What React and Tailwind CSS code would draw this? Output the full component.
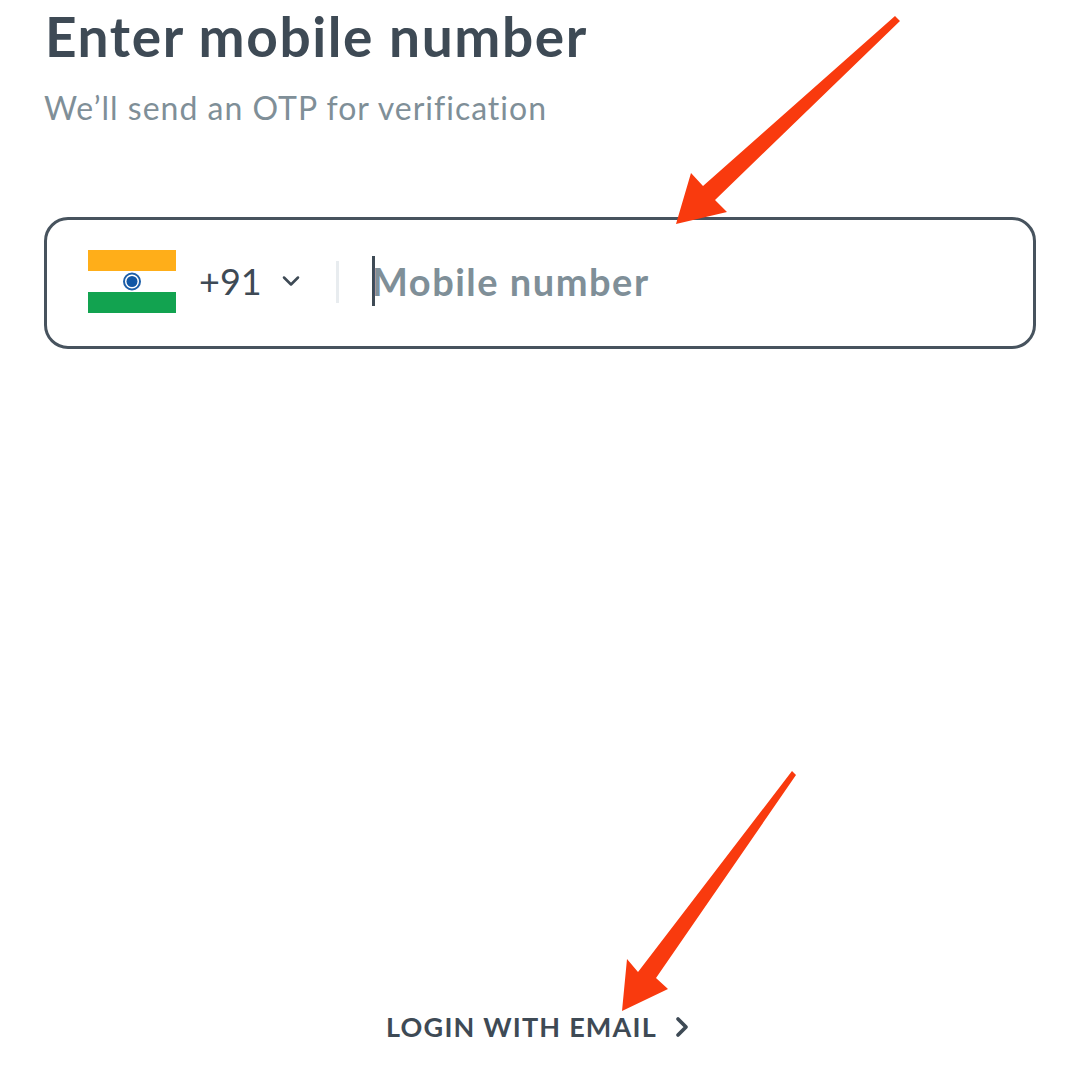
import { ChevronDown, ChevronRight } from 'lucide-react';

function Flag() {
  return (
    <svg width="88" height="63" viewBox="0 0 88 63" className="flex-shrink-0">
      <rect width="88" height="21" fill="#ffae19" />
      <rect y="21" width="88" height="21" fill="#ffffff" />
      <rect y="42" width="88" height="21" fill="#12a350" />
      <circle cx="44" cy="31.5" r="8" fill="none" stroke="#1d5fa8" strokeWidth="2" />
      <circle cx="44" cy="31.5" r="5.5" fill="#1157a5" />
    </svg>
  );
}

export default function App() {
  return (
    <div className="relative h-[1080px] w-[1080px] overflow-hidden bg-white text-[#3e4a55] font-['Lato',sans-serif]">
      <div className="flex h-full flex-col px-[45px]">
        {/* Header */}
        <h1 className="mt-[5px] h-[62px] text-[55px] font-bold leading-[62px] tracking-[1.6px]">Enter mobile number</h1>
        <p className="-ml-px mt-[21px] h-[40px] text-[32px] leading-[40px] tracking-[1px] text-[#7f8f98]">We’ll send an OTP for verification</p>

        {/* Phone input */}
        <div className="-ml-px mt-[89px] flex h-[132px] w-[992px] items-center rounded-[24px] border-[3px] border-[#47535e] pb-[4px] pl-[41px]">
          <Flag />
          <span className="ml-[23px] w-[62px] text-[36px] leading-none">+91</span>
          <ChevronDown className="ml-[16px] h-[28px] w-[28px]" strokeWidth={2.2} />
          <div className="ml-[31px] mt-[2px] h-[42px] w-[3px] bg-[#e8ecef]" />
          <div className="ml-[33px] h-[50px] w-[3px] bg-[#3e4a55]" />
          <span className="-ml-[3px] text-[38px] font-bold leading-none tracking-[1.5px] text-[#7f8f98]">Mobile number</span>
        </div>

        {/* Email link */}
        <div className="mt-auto mb-[36px] flex items-center justify-center gap-[9px] pl-[4px]">
          <span className="text-[27px] font-bold leading-[34px] tracking-[1.2px]">LOGIN WITH EMAIL</span>
          <ChevronRight className="h-[32px] w-[32px]" strokeWidth={2.8} />
        </div>
      </div>

      {/* Red annotation arrows */}
      <svg className="absolute inset-0" width="1080" height="1080" viewBox="0 0 1080 1080">
        <polygon points="895,16 900,21 715,200 727,212 676,224 691,173 703,186" fill="#f93a0e" />
        <polygon points="792,771 796,775 656,978 668,989 622,1011 627,959 638,972" fill="#f93a0e" />
      </svg>
    </div>
  );
}
